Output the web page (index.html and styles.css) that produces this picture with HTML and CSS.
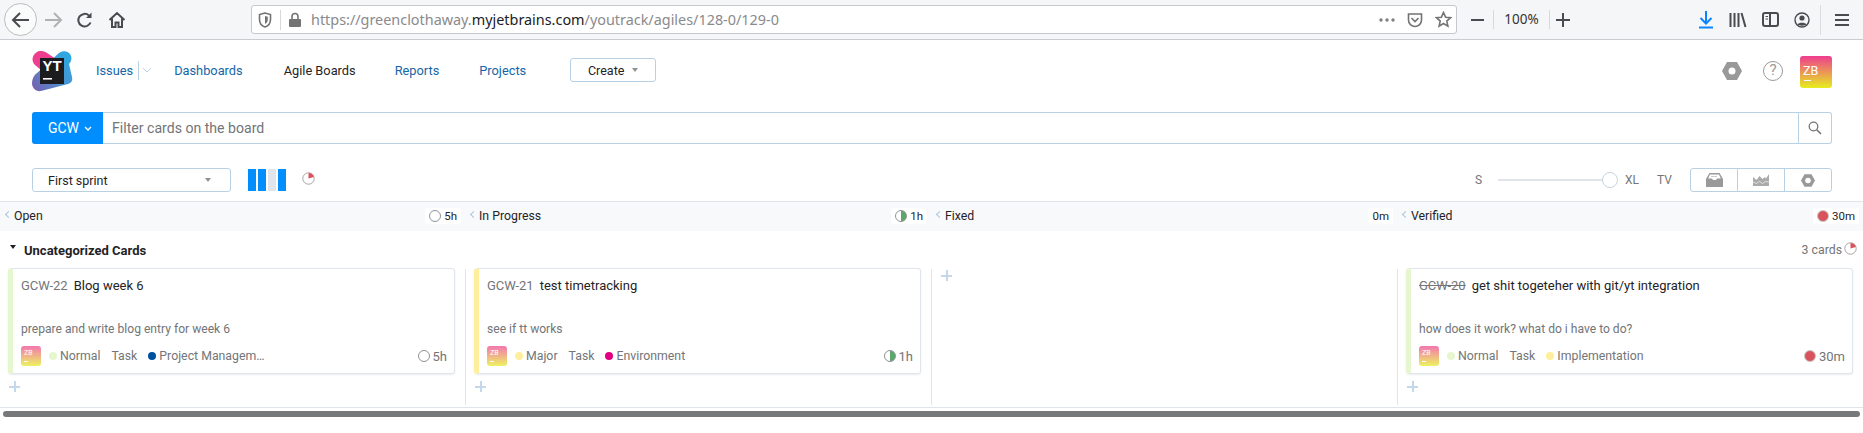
FILE: index.html
```html
<!DOCTYPE html>
<html>
<head>
    <title>Agile Boards</title>
    <link rel="stylesheet" href="styles.css">
</head>
<body>
    <!-- browser chrome -->
    <div class="toolbar">
        <div class="back-btn">
            <svg width="20" height="20" viewBox="0 0 20 20"><path d="M2 10h16M9 3l-7 7 7 7" class="ic ic-dark"/></svg>
        </div>
        <div class="tb-slot">
            <svg width="20" height="20" viewBox="0 0 20 20"><path d="M2 10h16M11 3l7 7-7 7" class="ic ic-off"/></svg>
        </div>
        <div class="tb-slot">
            <svg width="18" height="18" viewBox="0 0 18 18"><path d="M14.500 11.500A6.300 6.300 0 1 1 13 4.600" class="ic ic-dark"/><path d="M15.500 1.500v5.500h-5.500z" fill="#4a4a4f"/></svg>
        </div>
        <div class="tb-slot">
            <svg width="18" height="18" viewBox="0 0 18 18"><path d="M1.500 9 9 2l7.500 7M4 7.500V16h3.500v-4.500h3V16H14V7.500" class="ic ic-dark"/></svg>
        </div>
        <div class="urlbar">
            <svg class="shield" width="14" height="16" viewBox="0 0 14 16"><path d="M7 1 1.500 2.500v5C1.500 11 4 14 7 15c3-1 5.500-4 5.500-7.500v-5z" class="ic ic-gray"/><path d="M7 4v8c1.500-.8 2.800-2.500 2.800-4.500V4.800z" fill="#737373"/></svg>
            <span class="url-sep"></span>
            <svg class="lock" width="14" height="16" viewBox="0 0 14 16"><path d="M4 7V4.500a3 3 0 0 1 6 0V7" class="ic ic-gray"/><rect x="1" y="7" width="12" height="8" rx="1" fill="#737373"/></svg>
            <span class="url-text">https://greenclothaway.<b>myjetbrains.com</b>/youtrack/agiles/128-0/129-0</span>
            <svg class="dots" width="16" height="4" viewBox="0 0 16 4"><circle cx="2" cy="2" r="1.700"/><circle cx="8" cy="2" r="1.700"/><circle cx="14" cy="2" r="1.700"/></svg>
            <svg class="pocket" width="16" height="16" viewBox="0 0 16 16"><path d="M1.500 2h13v6a6.500 6.500 0 0 1-13 0z" class="ic ic-gray"/><path d="M4.500 6 8 9.500 11.500 6" class="ic ic-gray"/></svg>
            <svg class="star" width="17" height="17" viewBox="0 0 17 17"><path d="M8.500 1.500l2.100 4.700 5 .5-3.800 3.400 1.100 5-4.400-2.600-4.400 2.600 1.100-5L1.400 6.700l5-.5z" class="ic ic-gray"/></svg>
        </div>
        <div class="zoom-group">
            <div class="zoom-minus"><span class="dash"></span></div>
            <div class="zoom-pct">100%</div>
            <div class="zoom-plus">
                <svg width="14" height="14" viewBox="0 0 14 14"><path d="M0 7h14M7 0v14" class="ic ic-dark"/></svg>
            </div>
        </div>
        <div class="tb-right">
            <div class="tb-slot">
                <svg width="16" height="18" viewBox="0 0 16 18"><path d="M8 0v12M2.500 7 8 12.500 13.500 7M1 16.500h14" class="ic ic-blue"/></svg>
            </div>
            <div class="tb-slot">
                <svg width="18" height="16" viewBox="0 0 18 16"><path d="M1.500 1v14M5.500 1v14M9.500 1v14M12.500 1l4 14" class="ic ic-dark"/></svg>
            </div>
            <div class="tb-slot">
                <svg width="17" height="15" viewBox="0 0 17 15"><rect x="1" y="1" width="15" height="13" rx="2" class="ic ic-dark"/><path d="M8 1v13" class="ic ic-dark"/><path d="M3.500 4.500H6M3.500 7H6" stroke="#4a4a4f" stroke-width="1.200"/></svg>
            </div>
            <div class="tb-slot">
                <svg width="16" height="16" viewBox="0 0 16 16"><circle cx="8" cy="8" r="7" class="ic ic-dark ic-thin"/><circle cx="8" cy="6" r="2.600" fill="#4a4a4f"/><path d="M3.500 12.500c1-2.500 8-2.500 9 0-1 1.500-8 1.500-9 0z" fill="#4a4a4f"/></svg>
            </div>
            <span class="tb-sep"></span>
            <div class="tb-slot">
                <svg width="14" height="12" viewBox="0 0 14 12"><path d="M0 1h14M0 6h14M0 11h14" class="ic ic-dark"/></svg>
            </div>
        </div>
    </div>

    <!-- youtrack header -->
    <div class="nav">
        <svg class="logo" width="41" height="41" viewBox="0 0 41 41">
            <defs>
                <linearGradient id="logoBottom" x1="0" y1="1" x2="1" y2="0.300">
                    <stop offset="0" stop-color="#7a5cab"/>
                    <stop offset="0.550" stop-color="#4f8fd0"/>
                    <stop offset="1" stop-color="#2ea8e0"/>
                </linearGradient>
            </defs>
            <path d="M27 2c4-3 9-2 11 1s2 7-1 10l3 13c1 4-1 6-4 7L9 40c-5 1-9-3-9-8 0-4 2-8 5-10z" fill="url(#logoBottom)"/>
            <path d="M5 1c3-2 7-1 10 1l12 8-12 14L3 14C-1 10 0 4 5 1z" fill="#ef3d8f"/>
            <rect x="8" y="7" width="24" height="26" fill="#1c1c1e"/>
            <text x="10.500" y="20" class="logo-text">YT</text>
            <rect x="11" y="27" width="9" height="1.600" fill="#fff"/>
        </svg>
        <a class="nav-link nav-issues">Issues</a>
        <span class="issues-split">
            <svg width="10" height="6" viewBox="0 0 10 6"><path d="M1 1l4 4 4-4" fill="none" stroke="#b8d1e5"/></svg>
        </span>
        <a class="nav-link nav-dash">Dashboards</a>
        <a class="nav-link nav-boards">Agile Boards</a>
        <a class="nav-link nav-reports">Reports</a>
        <a class="nav-link nav-projects">Projects</a>
        <div class="create-btn">Create <span class="caret"></span></div>
        <div class="nav-right">
            <svg width="20" height="18" viewBox="0 0 20 18"><path fill-rule="evenodd" d="M5 0h10l5 9-5 9H5L0 9zM10 5.500a3.500 3.500 0 1 0 0 7 3.500 3.500 0 0 0 0-7z" fill="#999"/></svg>
            <div class="help-icon">?</div>
            <div class="avatar avatar-big">ZB<i></i></div>
        </div>
    </div>

    <div class="search">
        <div class="search-ctx">GCW
            <svg width="8" height="5" viewBox="0 0 8 5"><path d="M1 1l3 3 3-3" fill="none" stroke="#fff" stroke-width="1.300"/></svg>
        </div>
        <div class="search-input">Filter cards on the board</div>
        <div class="search-btn">
            <svg width="14" height="14" viewBox="0 0 14 14"><circle cx="5.500" cy="5.500" r="4.300" fill="none" stroke="#737577" stroke-width="1.300"/><path d="M8.700 8.700 13 13" stroke="#737577" stroke-width="1.600"/></svg>
        </div>
    </div>

    <div class="sprint-row">
        <div class="sprint-select">First sprint <span class="caret"></span></div>
        <div class="col-bars">
            <span class="bar"></span><span class="bar"></span><span class="bar bar-off"></span><span class="bar"></span>
        </div>
        <svg class="pie" width="13" height="13" viewBox="0 0 13 13"><circle cx="6.500" cy="6.500" r="5.700" fill="#fff" stroke="#b0a0a0"/><path d="M6.500 6.500V1a5.500 5.500 0 0 1 5.300 4z" fill="#d9535d"/></svg>
        <div class="sprint-right">
            <span class="size-label">S</span>
            <div class="slider"><span class="slider-knob"></span></div>
            <span class="size-label size-xl">XL</span>
            <span class="size-label size-tv">TV</span>
            <div class="btn-group">
                <div class="btn-cell">
                    <svg width="17" height="14" viewBox="0 0 17 14"><path fill-rule="evenodd" d="M3.500 0h10L17 6v8H0V6zM4 1.500 2.200 5.500H6L7 7h3l1-1.500h3.800L13 1.500z" fill="#999"/><path d="M5.500 3.500h6" stroke="#999" stroke-dasharray="1 1"/></svg>
                </div>
                <div class="btn-cell">
                    <svg width="16" height="12" viewBox="0 0 16 12"><path d="M0 3l3.500 3L6.500 2l3 3L12 3l1 1.500L16 0v12H0z" fill="#aaa"/><path d="M0 8l3.500 1.500 3-2 3 2 3-2L16 8" fill="none" stroke="#fff" stroke-width=".6"/></svg>
                </div>
                <div class="btn-cell">
                    <svg width="14" height="13" viewBox="0 0 20 18"><path fill-rule="evenodd" d="M5 0h10l5 9-5 9H5L0 9zM10 5a4 4 0 1 0 0 8 4 4 0 0 0 0-8z" fill="#999"/></svg>
                </div>
            </div>
        </div>
    </div>

    <!-- board -->
    <div class="board">
        <div class="board-head">
            <div class="head-cell">
                <span class="head-chev"></span><span class="head-name">Open</span>
                <span class="est-pill"><span class="est est-open"></span>5h</span>
            </div>
            <div class="head-cell">
                <span class="head-chev"></span><span class="head-name">In Progress</span>
                <span class="est-pill"><span class="est est-half"></span>1h</span>
            </div>
            <div class="head-cell">
                <span class="head-chev"></span><span class="head-name">Fixed</span>
                <span class="est-pill">0m</span>
            </div>
            <div class="head-cell">
                <span class="head-chev"></span><span class="head-name">Verified</span>
                <span class="est-pill"><span class="est est-done"></span>30m</span>
            </div>
        </div>

        <div class="lane-title">
            <span class="lane-arrow"></span>
            <span class="lane-name">Uncategorized Cards</span>
            <span class="lane-count">3 cards</span>
            <svg width="13" height="13" viewBox="0 0 13 13"><circle cx="6.500" cy="6.500" r="5.700" fill="#fff" stroke="#b0a0a0"/><path d="M6.500 6.500V1a5.500 5.500 0 0 1 5.300 4z" fill="#d9535d"/></svg>
        </div>

        <div class="lane">
            <div class="lane-col">
                <div class="card card-normal">
                    <div class="card-title"><span class="card-id">GCW-22</span>Blog week 6</div>
                    <div class="card-desc">prepare and write blog entry for week 6</div>
                    <div class="card-foot">
                        <div class="avatar avatar-small">ZB<i></i></div>
                        <span class="field"><span class="dot dot-normal"></span>Normal</span>
                        <span class="field">Task</span>
                        <span class="field"><span class="dot dot-project"></span>Project Managem…</span>
                        <span class="card-est"><span class="est est-open"></span>5h</span>
                    </div>
                </div>
                <div class="add-card"></div>
            </div>
            <div class="lane-col">
                <div class="card card-major">
                    <div class="card-title"><span class="card-id">GCW-21</span>test timetracking</div>
                    <div class="card-desc">see if tt works</div>
                    <div class="card-foot">
                        <div class="avatar avatar-small">ZB<i></i></div>
                        <span class="field"><span class="dot dot-major"></span>Major</span>
                        <span class="field">Task</span>
                        <span class="field"><span class="dot dot-env"></span>Environment</span>
                        <span class="card-est"><span class="est est-half"></span>1h</span>
                    </div>
                </div>
                <div class="add-card"></div>
            </div>
            <div class="lane-col">
                <div class="add-card add-empty"></div>
            </div>
            <div class="lane-col">
                <div class="card card-normal">
                    <div class="card-title"><span class="card-id card-id-done">GCW-20</span>get shit togeteher with git/yt integration</div>
                    <div class="card-desc">how does it work? what do i have to do?</div>
                    <div class="card-foot">
                        <div class="avatar avatar-small">ZB<i></i></div>
                        <span class="field"><span class="dot dot-normal"></span>Normal</span>
                        <span class="field">Task</span>
                        <span class="field"><span class="dot dot-major"></span>Implementation</span>
                        <span class="card-est"><span class="est est-done"></span>30m</span>
                    </div>
                </div>
                <div class="add-card"></div>
            </div>
        </div>
    </div>
    <div class="scrollbar"><span class="scroll-thumb"></span></div>
</body>
</html>
```

FILE: styles.css
```css
body {
    margin: 0;
    height: 433px;
    overflow: hidden;
    background: #fff;
    font-family: Roboto, "Liberation Sans", sans-serif;
    font-size: 13px;
    color: #1f2326;
}

/* browser toolbar */
.toolbar {
    display: flex;
    align-items: center;
    height: 39px;
    padding-left: 4px;
    background: #f5f6f8;
    border-bottom: 1px solid #c9ccd1;
}
.ic {
    fill: none;
    stroke-width: 2;
}
.ic-dark { stroke: #4a4a4f; }
.ic-off { stroke: #b1b1b3; }
.ic-gray { stroke: #737373; stroke-width: 1.6; }
.ic-blue { stroke: #0a84ff; }
.ic-thin { stroke-width: 1.400; }
.back-btn {
    display: flex;
    align-items: center;
    justify-content: center;
    width: 31px;
    height: 31px;
    border: 1px solid #bbbcbe;
    border-radius: 50%;
    background: #fafbfb;
}
.tb-slot {
    display: flex;
    align-items: center;
    justify-content: center;
    width: 32px;
    height: 30px;
}
.urlbar {
    display: flex;
    align-items: center;
    box-sizing: border-box;
    width: 1206px;
    height: 29px;
    margin-left: 118px;
    padding: 0 14px 0 6px;
    background: #fff;
    border: 1px solid #c5c8cd;
    border-radius: 3px;
}
.url-sep {
    width: 1px;
    height: 20px;
    margin: 0 6px 0 8px;
    background: #d7d8da;
}
.lock { margin-left: 1px; }
.url-text {
    margin-left: 9px;
    font-family: "Noto Sans", sans-serif;
    font-size: 14.400px;
    color: #8a8a8d;
    white-space: nowrap;
}
.url-text b {
    font-weight: 400;
    color: #202124;
}
.dots {
    margin-left: auto;
    fill: #808080;
}
.pocket { margin-left: 12px; }
.star { margin-left: 12px; margin-right: -10px; }

.zoom-group {
    display: flex;
    align-items: center;
    margin-left: 5px;
    height: 19px;
}
.zoom-minus {
    display: flex;
    align-items: center;
    justify-content: center;
    box-sizing: border-box;
    width: 32px;
    height: 19px;
    border-right: 1px solid #d7d8da;
}
.dash {
    width: 13px;
    height: 2px;
    background: #4a4a4f;
}
.zoom-pct {
    box-sizing: border-box;
    width: 56px;
    height: 19px;
    line-height: 19px;
    text-align: center;
    border-right: 1px solid #d7d8da;
    font-family: "Noto Sans", sans-serif;
    font-size: 13.500px;
    color: #333;
}
.zoom-plus {
    display: flex;
    align-items: center;
    justify-content: center;
    width: 25px;
}
.tb-right {
    display: flex;
    align-items: center;
    margin-left: auto;
    padding-right: 5px;
}
.tb-sep {
    width: 1px;
    height: 30px;
    margin: 0 5px 0 2px;
    background: #dcdddf;
}

/* header */
.nav {
    display: flex;
    align-items: center;
    height: 62px;
    padding-left: 32px;
}
.logo { margin-top: 1px; }
.logo-text {
    font-family: "Liberation Sans", sans-serif;
    font-size: 15px;
    font-weight: 700;
    fill: #fff;
}
.nav-link {
    margin-top: -2px;
    font-size: 12.800px;
    color: #1466a8;
    white-space: nowrap;
}
.nav-issues { margin-left: 23px; }
.issues-split {
    display: flex;
    align-items: center;
    height: 19px;
    margin: -2px 0 0 5px;
    padding-left: 3px;
    border-left: 1px solid #b8d1e5;
}
.nav-dash { margin-left: 22px; }
.nav-boards { margin-left: 41px; color: #1f2326; }
.nav-reports { margin-left: 39px; }
.nav-projects { margin-left: 40px; }
.create-btn {
    display: flex;
    align-items: center;
    justify-content: center;
    gap: 8px;
    box-sizing: border-box;
    width: 86px;
    height: 24px;
    margin: -2px 0 0 44px;
    font-size: 12.500px;
    border: 1px solid #b8d1e5;
    border-radius: 3px;
}
.caret {
    width: 0;
    height: 0;
    border-top: 4px solid #8f9396;
    border-left: 3px solid transparent;
    border-right: 3px solid transparent;
}
.nav-right {
    display: flex;
    align-items: center;
    margin-left: auto;
    padding-right: 31px;
}
.help-icon {
    box-sizing: border-box;
    width: 20px;
    height: 20px;
    margin: 0 17px 0 21px;
    line-height: 17px;
    text-align: center;
    border: 1.500px solid #999;
    border-radius: 50%;
    font-size: 15px;
    color: #999;
}
.avatar {
    position: relative;
    box-sizing: border-box;
    color: #fff;
    background: linear-gradient(#ef3d8f, #e6ee1e);
    border-radius: 3px;
}
.avatar i {
    position: absolute;
    height: 1px;
    background: #fff;
}
.avatar-big {
    width: 32px;
    height: 32px;
    margin-top: 1px;
    padding: 8px 0 0 3px;
    font-size: 12.500px;
    line-height: 14px;
}
.avatar-big i {
    left: 4px;
    bottom: 7px;
    width: 7px;
}
.avatar-small {
    flex: none;
    width: 20px;
    height: 20px;
    padding: 3px 0 0 3px;
    font-size: 7px;
    line-height: 9px;
    opacity: 0.7;
}
.avatar-small i {
    left: 3px;
    bottom: 4px;
    width: 4px;
}

/* search */
.search {
    display: flex;
    box-sizing: border-box;
    height: 32px;
    margin: 10px 31px 0 32px;
    border: 1px solid #b8d1e5;
    border-left: none;
    border-radius: 3px;
}
.search-ctx {
    display: flex;
    align-items: center;
    justify-content: center;
    gap: 5px;
    flex: none;
    box-sizing: border-box;
    width: 71px;
    margin: -1px 0;
    padding-left: 5px;
    color: #fff;
    font-size: 14px;
    background: #008eff;
    border-radius: 3px 0 0 3px;
}
.search-input {
    flex: 1;
    padding-left: 9px;
    line-height: 30px;
    color: #737577;
    font-size: 14.100px;
}
.search-btn {
    display: flex;
    align-items: center;
    justify-content: center;
    width: 32px;
    border-left: 1px solid #b8d1e5;
}

/* sprint row */
.sprint-row {
    display: flex;
    align-items: center;
    height: 24px;
    margin-top: 24px;
    padding: 0 31px 0 32px;
}
.sprint-select {
    display: flex;
    align-items: center;
    justify-content: space-between;
    box-sizing: border-box;
    width: 199px;
    height: 24px;
    padding: 0 19px 0 15px;
    font-size: 12.500px;
    border: 1px solid #b8d1e5;
    border-radius: 3px;
}
.col-bars {
    display: flex;
    gap: 2px;
    margin-left: 17px;
}
.bar {
    width: 8px;
    height: 22px;
    background: #008eff;
}
.bar-off { background: #dfe5eb; }
.pie { margin: -4px 0 0 16px; }
.sprint-right {
    display: flex;
    align-items: center;
    margin-left: auto;
}
.size-label {
    color: #737577;
    font-size: 12px;
}
.slider {
    position: relative;
    width: 112px;
    height: 2px;
    margin: 0 0 0 16px;
    background: #dfe5eb;
}
.slider-knob {
    position: absolute;
    right: -8px;
    top: -7px;
    box-sizing: border-box;
    width: 16px;
    height: 16px;
    background: #fff;
    border: 1px solid #c9d3dc;
    border-radius: 50%;
}
.size-xl { margin-left: 15px; }
.size-tv { margin-left: 18px; }
.btn-group {
    display: flex;
    box-sizing: border-box;
    width: 142px;
    height: 24px;
    margin-left: 18px;
    border: 1px solid #b8d1e5;
    border-radius: 3px;
}
.btn-cell {
    display: flex;
    align-items: center;
    justify-content: center;
    flex: 1;
    border-left: 1px solid #b8d1e5;
}
.btn-cell:first-child { border-left: none; }

/* board */
.board {
    margin-top: 9px;
    height: 206px;
    border-bottom: 1px solid #dfe5eb;
}
.board-head {
    display: grid;
    grid-template-columns: 465px 466px 466px 466px;
    height: 29px;
    background: #f7f9fb;
    border-top: 1px solid #dfe5eb;
}
.head-cell {
    display: flex;
    align-items: center;
    padding: 0 4px;
}
.head-chev {
    width: 4px;
    height: 4px;
    margin: -4px 2px 0 2px;
    border-left: 1px solid #a9c6e0;
    border-bottom: 1px solid #a9c6e0;
    transform: rotate(45deg);
}
.head-name {
    margin: -1px 0 0 1px;
    font-size: 12.300px;
}
.est-pill {
    display: flex;
    align-items: center;
    gap: 3px;
    height: 16px;
    margin: -1px 0 0 auto;
    padding: 0 4px;
    background: #fff;
    border-radius: 3px;
    font-size: 11.500px;
}
.est {
    flex: none;
    box-sizing: border-box;
    width: 12px;
    height: 12px;
    border-radius: 50%;
}
.est-open {
    background: #fff;
    border: 1px solid #8f9396;
}
.est-half {
    background: linear-gradient(90deg, #fff 50%, #59a869 50%);
    border: 1px solid #8f9396;
}
.est-done {
    background: #d9535d;
    border: 1px solid #c9c9c9;
}
.lane-title {
    display: flex;
    align-items: center;
    height: 38px;
    padding: 0 6px 0 10px;
}
.lane-arrow {
    width: 0;
    height: 0;
    margin: -6px 8px 0 0;
    border-bottom: 4px solid #1f2326;
    border-left: 3px solid transparent;
    border-right: 3px solid transparent;
    transform: rotate(180deg);
}
.lane-name {
    font-weight: 700;
    font-size: 13px;
}
.lane-count {
    margin: 0 2px 0 auto;
    color: #737577;
    font-size: 12.300px;
}
.lane-title svg { margin-top: -3px; }
.lane {
    display: grid;
    grid-template-columns: 465px 466px 466px 466px;
    height: 136px;
}
.lane-col {
    padding: 0 10px 0 8px;
    border-left: 1px solid #dfe5eb;
}
.lane-col:first-child { border-left: none; }
.card {
    box-sizing: border-box;
    height: 106px;
    margin-top: -1px;
    padding: 0 7px 0 8px;
    border: 1px solid #dfe5eb;
    border-left: 5px solid #e6f6cf;
    border-radius: 3px;
    box-shadow: 0 1px 2px rgba(0, 0, 0, 0.08);
}
.card-normal { border-left-color: #e6f6cf; }
.card-major { border-left-color: #ffee9c; }
.card-title {
    height: 33px;
    padding-top: 9px;
    box-sizing: border-box;
    line-height: 16px;
    white-space: nowrap;
}
.card-id {
    margin-right: 6px;
    color: #737577;
}
.card-id-done { text-decoration: line-through; }
.card-desc {
    height: 43px;
    padding-top: 18px;
    box-sizing: border-box;
    line-height: 18px;
    color: #737577;
    font-size: 12.100px;
}
.card-foot {
    display: flex;
    align-items: center;
    height: 20px;
    margin-top: 1px;
    color: #737577;
    font-size: 12.300px;
}
.field {
    display: flex;
    align-items: center;
    gap: 3px;
    margin-left: 8px;
    margin-right: 3px;
    white-space: nowrap;
}
.dot {
    width: 8px;
    height: 8px;
    border-radius: 50%;
}
.dot-normal { background: #e6f6cf; }
.dot-major { background: #ffee9c; }
.dot-project { background: #0050a0; }
.dot-env { background: #e30080; }
.card-est {
    display: flex;
    align-items: center;
    gap: 3px;
    margin-left: auto;
    font-size: 13px;
}
.add-card {
    width: 11px;
    height: 11px;
    margin: 7px 0 0 1px;
    background:
        linear-gradient(#c4d8ea, #c4d8ea) center / 11px 2px no-repeat,
        linear-gradient(#c4d8ea, #c4d8ea) center / 2px 11px no-repeat;
}
.add-empty { margin-top: 1px; }

.scrollbar {
    padding: 3px 3px 0 3px;
}
.scroll-thumb {
    display: block;
    height: 6px;
    background: #777879;
    border-radius: 3px;
}
```
